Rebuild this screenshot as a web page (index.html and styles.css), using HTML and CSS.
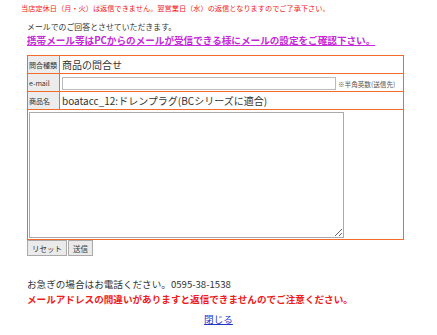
FILE: index.html
```html
<!DOCTYPE html>
<html lang="ja">
<head>
  <meta charset="UTF-8" />
  <title>お問い合わせ</title>
  <link rel="stylesheet" href="styles.css">
</head>
<body>
  <p class="holiday">当店定休日（月・火）は返信できません。翌営業日（水）の返信となりますのでご了承下さい。</p>
  <div class="content">
    <p class="intro">メールでのご回答とさせていただきます。</p>
    <p class="mobile">携帯メール等はPCからのメールが受信できる様にメールの設定をご確認下さい。</p>

    <form class="inquiry">
      <table class="form-table">
        <tr>
          <th>問合種類</th>
          <td class="val">商品の問合せ</td>
        </tr>
        <tr>
          <th>e-mail</th>
          <td class="val"><input type="text" class="mail"><span class="hint">※半角英数(送信先)</span></td>
        </tr>
        <tr>
          <th>商品名</th>
          <td class="val">boatacc_12:ドレンプラグ(BCシリーズに適合)</td>
        </tr>
        <tr>
          <td colspan="2" class="msg"><textarea></textarea></td>
        </tr>
      </table>
      <div class="buttons">
        <button type="reset">リセット</button><button type="button">送信</button>
      </div>
    </form>

    <p class="tel">お急ぎの場合はお電話ください。0595-38-1538</p>
    <p class="warn">メールアドレスの間違いがありますと返信できませんのでご注意ください。</p>
  </div>
  <p class="close"><a href="#">閉じる</a></p>
</body>
</html>
```

FILE: styles.css
```css
body {
  margin: 0;
  padding: 0 0 0 21px;
  font-family: "Noto Sans CJK JP", "Noto Sans", sans-serif;
  color: #333;
  background: #fff;
}
p {
  margin: 0;
}
.holiday {
  font-size: 7.2px;
  line-height: 10px;
  color: #f02020;
  padding-top: 3px;
}
.content {
  padding-left: 6px;
}
.intro {
  font-size: 7.9px;
  line-height: 12px;
  margin-top: 8px;
  color: #333;
}
.mobile {
  font-size: 9.6px;
  line-height: 14px;
  font-weight: bold;
  color: #c62ad8;
  text-decoration: underline;
}
.inquiry {
  margin-top: 8px;
}
.form-table {
  border-collapse: collapse;
  border: 1px solid #f26b2a;
  width: 377px;
}
.form-table th,
.form-table td {
  border: 1px solid #f26b2a;
  padding: 0;
  height: 17px;
}
.form-table th {
  width: 30px;
  background: #ececec;
  font-size: 7px;
  font-weight: normal;
  text-align: left;
  color: #333;
  white-space: nowrap;
  padding-left: 1px;
}
.val {
  font-size: 10px;
  padding-left: 2px !important;
  white-space: nowrap;
}
.mail {
  width: 274px;
  height: 13px;
  box-sizing: border-box;
  border: 1px solid #bbb;
  padding: 0;
  margin: 0 2px 0 0;
  vertical-align: middle;
}
.hint {
  font-size: 6.6px;
  color: #555;
  vertical-align: middle;
}
.msg {
  height: auto !important;
  padding: 2px 0 1px 1px !important;
}
.msg textarea {
  display: block;
  width: 315px;
  height: 126px;
  box-sizing: border-box;
  border: 1px solid #aaa;
  margin: 0;
  padding: 2px;
}
.buttons {
  display: flex;
  gap: 1px;
}
.buttons button {
  font-family: inherit;
  font-size: 7.5px;
  height: 16px;
  padding: 0 4px;
  background: #eaeaea;
  border: 1px solid #aaa;
  color: #333;
  margin: 0;
}
.tel {
  font-size: 9.6px;
  line-height: 14px;
  margin-top: 21px;
}
.warn {
  font-size: 9.6px;
  line-height: 14px;
  margin-top: 1px;
  font-weight: bold;
  color: #ee1c1c;
}
.close {
  text-align: center;
  font-size: 9.6px;
  margin: 6px 0 0 -21px;
}
.close a {
  color: #2233cc;
}
```
